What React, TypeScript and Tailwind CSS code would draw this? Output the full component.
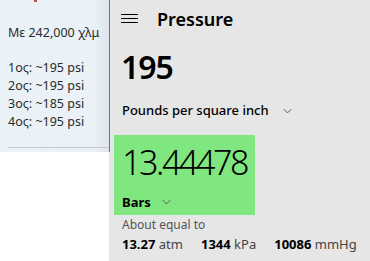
import React from "react";

const font = { fontFamily: '"Noto Sans", "Open Sans", Arial, sans-serif' };

function Chevron({ className }: { className?: string }) {
  return (
    <svg viewBox="0 0 12 8" className={className} fill="none" stroke="currentColor" strokeWidth="1">
      <path d="M1 1.5 L6 6.5 L11 1.5" />
    </svg>
  );
}

function Notes() {
  const rows = ["1ος: ~195 psi", "2ος: ~195 psi", "3ος: ~185 psi", "4ος: ~195 psi"];
  return (
    <div className="flex w-[109px] shrink-0 flex-col">
      <div className="flex h-[152px] flex-col bg-gradient-to-r from-[#eaf2f7] from-85% to-[#dde5ea] pl-2 text-[12.5px] text-[#2b2b2b]">
        <div className="ml-[26px] h-[2px] w-[3px] bg-[#b55]" />
        <p className="mt-[22px] leading-[18px]">Με 242,000 χλμ</p>
        <div className="mt-[17px] flex flex-col">
          {rows.map((r) => (
            <p key={r} className="leading-[18px]">
              {r}
            </p>
          ))}
        </div>
        <div className="mt-auto mb-[4px] h-px bg-[#c8c8cc]" />
      </div>
      <div className="flex-1 bg-white" />
    </div>
  );
}

export default function App() {
  return (
    <div className="flex h-[261px] w-[370px] overflow-hidden bg-[#e6e6e6]" style={font}>
      <Notes />
      <div className="h-[152px] w-px shrink-0 bg-[#2f86e0]" />
      <div className="flex flex-1 flex-col pl-[4px] text-black">
        <div className="flex h-[37px] items-center pl-[7px]">
          <div className="flex w-[17px] flex-col gap-[3px]">
            <span className="h-px bg-black" />
            <span className="h-px bg-black" />
            <span className="h-px bg-black" />
          </div>
          <span className="ml-[19px] text-[18px] font-semibold leading-none">Pressure</span>
        </div>
        <div className="ml-[7px] mt-[14px] text-[32px] font-semibold leading-none tracking-[-1px]">195</div>
        <div className="ml-[8px] mt-[18px] flex items-center text-[13px] font-medium">
          Pounds per square inch
          <Chevron className="ml-[13px] h-[6px] w-[11px] text-[#333]" />
        </div>
        <div className="mt-[14px] flex h-[80px] w-[141px] flex-col bg-[#80e680] pl-[8px]">
          <div className="mt-[5px] text-[34px] font-light leading-[44px] tracking-[-2.4px]">13.44478</div>
          <div className="mt-[9px] flex items-center text-[13px] font-bold">
            Bars
            <Chevron className="ml-[10px] h-[6px] w-[11px] text-[#333]" />
          </div>
        </div>
        <div className="ml-[8px] mt-[2px] text-[12px] leading-[16px] text-[#555]">About equal to</div>
        <div className="ml-[8px] mt-[3px] flex gap-[18px] text-[13px] leading-[16px]">
          <span>
            <b className="font-bold">13.27</b> <span className="text-[#444]">atm</span>
          </span>
          <span>
            <b className="font-bold">1344</b> <span className="text-[#444]">kPa</span>
          </span>
          <span>
            <b className="font-bold">10086</b> <span className="text-[#444]">mmHg</span>
          </span>
        </div>
      </div>
    </div>
  );
}
